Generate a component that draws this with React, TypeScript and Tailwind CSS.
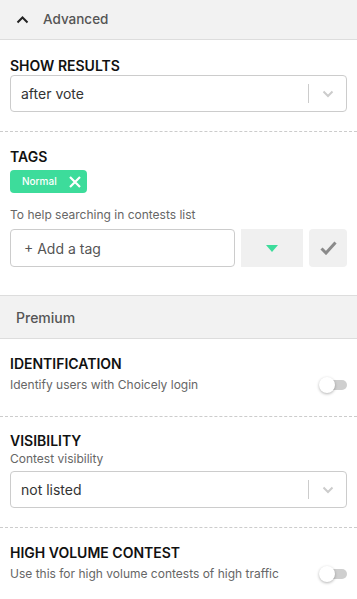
import React from "react";

const font = { fontFamily: "Inter, 'Noto Sans', sans-serif" };

function Chevron() {
  return (
    <svg width="12" height="8" viewBox="0 0 12 8" fill="none">
      <path d="M1.5 1.5 L6 6 L10.5 1.5" stroke="#cccccc" strokeWidth="2" />
    </svg>
  );
}

function Select({ value }: { value: string }) {
  return (
    <div className="flex h-[37px] items-center rounded-[4px] border border-[#cccccc] bg-white">
      <span className="flex-1 pl-[10px] text-[14px] text-[#333333]">{value}</span>
      <div className="h-[19px] w-px bg-[#cccccc]" />
      <div className="flex w-[37px] items-center justify-center">
        <Chevron />
      </div>
    </div>
  );
}

function Toggle() {
  return (
    <div className="relative h-[16px] w-[28px] shrink-0">
      <div className="absolute right-0 top-[3px] h-[10px] w-[22px] rounded-full bg-[#cfcfcf]" />
      <div className="absolute left-0 top-[0px] h-[16px] w-[16px] rounded-full bg-white shadow-[0_1px_3px_rgba(0,0,0,0.3)]" />
    </div>
  );
}

function Label({ children }: { children: React.ReactNode }) {
  return <div className="text-[14px] font-semibold leading-4 text-[#111111]">{children}</div>;
}

export default function App() {
  return (
    <div style={font} className="w-[357px] bg-white">
      {/* Advanced header */}
      <div className="flex h-[40px] items-center gap-[14px] border-b border-[#dddddd] bg-[#f2f2f2] pl-[16px]">
        <svg width="13" height="8" viewBox="0 0 13 8" fill="none">
          <path d="M1.5 6.5 L6.5 1.5 L11.5 6.5" stroke="#222222" strokeWidth="2" />
        </svg>
        <span className="text-[13.5px] font-medium text-[#555555]">Advanced</span>
      </div>

      {/* Show results */}
      <div className="px-[10px] pb-[19px] pt-[18px]">
        <Label>SHOW RESULTS</Label>
        <div className="mt-px">
          <Select value="after vote" />
        </div>
      </div>

      {/* Tags */}
      <div className="border-t border-dashed border-[#cccccc] px-[10px] pb-[28px] pt-[17px]">
        <Label>TAGS</Label>
        <div className="mt-[5px] flex">
          <div className="flex h-[23px] items-center gap-[12px] rounded-[4px] bg-[#3ddc9b] pl-[12px] pr-[6px]">
            <span className="text-[10px] font-medium text-white">Normal</span>
            <svg width="12" height="12" viewBox="0 0 12 12" fill="none">
              <path d="M1 1 L11 11 M11 1 L1 11" stroke="white" strokeWidth="2.2" />
            </svg>
          </div>
        </div>
        <div className="mt-[14px] text-[12px] leading-4 text-[#666666]">To help searching in contests list</div>
        <div className="mt-[6px] flex h-[38px] gap-[6px]">
          <div className="flex w-[225px] items-center rounded-[4px] border border-[#cccccc] pl-[13px] text-[14px] text-[#555555]">
            + Add a tag
          </div>
          <div className="flex w-[62px] items-center justify-center bg-[#f0f0f0]">
            <svg width="12" height="7" viewBox="0 0 12 7">
              <path d="M0 0 L12 0 L6 7 Z" fill="#3ddc9b" />
            </svg>
          </div>
          <div className="flex w-[38px] items-center justify-center rounded-[4px] bg-[#f0f0f0]">
            <svg width="17" height="14" viewBox="0 0 17 14" fill="none">
              <path d="M1.5 7.5 L6 12 L15.5 1.5" stroke="#8a8a8a" strokeWidth="3" />
            </svg>
          </div>
        </div>
      </div>

      {/* Premium header */}
      <div className="flex h-[44px] items-center border-y border-[#dddddd] bg-[#f2f2f2] pl-[16px]">
        <span className="text-[14px] font-medium text-[#555555]">Premium</span>
      </div>

      {/* Identification */}
      <div className="px-[10px] pb-[23px] pt-[17px]">
        <Label>IDENTIFICATION</Label>
        <div className="mt-[5px] flex items-center justify-between">
          <span className="text-[12px] leading-4 text-[#666666]">Identify users with Choicely login</span>
          <Toggle />
        </div>
      </div>

      {/* Visibility */}
      <div className="border-t border-dashed border-[#cccccc] px-[10px] pb-[19px] pt-[16px]">
        <Label>VISIBILITY</Label>
        <div className="mt-[2px] text-[12px] leading-4 text-[#666666]">Contest visibility</div>
        <div className="mt-[4px]">
          <Select value="not listed" />
        </div>
      </div>

      {/* High volume */}
      <div className="border-t border-dashed border-[#cccccc] px-[10px] pb-[20px] pt-[17px]">
        <Label>HIGH VOLUME CONTEST</Label>
        <div className="mt-[5px] flex items-center justify-between">
          <span className="text-[12px] leading-4 text-[#666666]">Use this for high volume contests of high traffic</span>
          <Toggle />
        </div>
      </div>
    </div>
  );
}
